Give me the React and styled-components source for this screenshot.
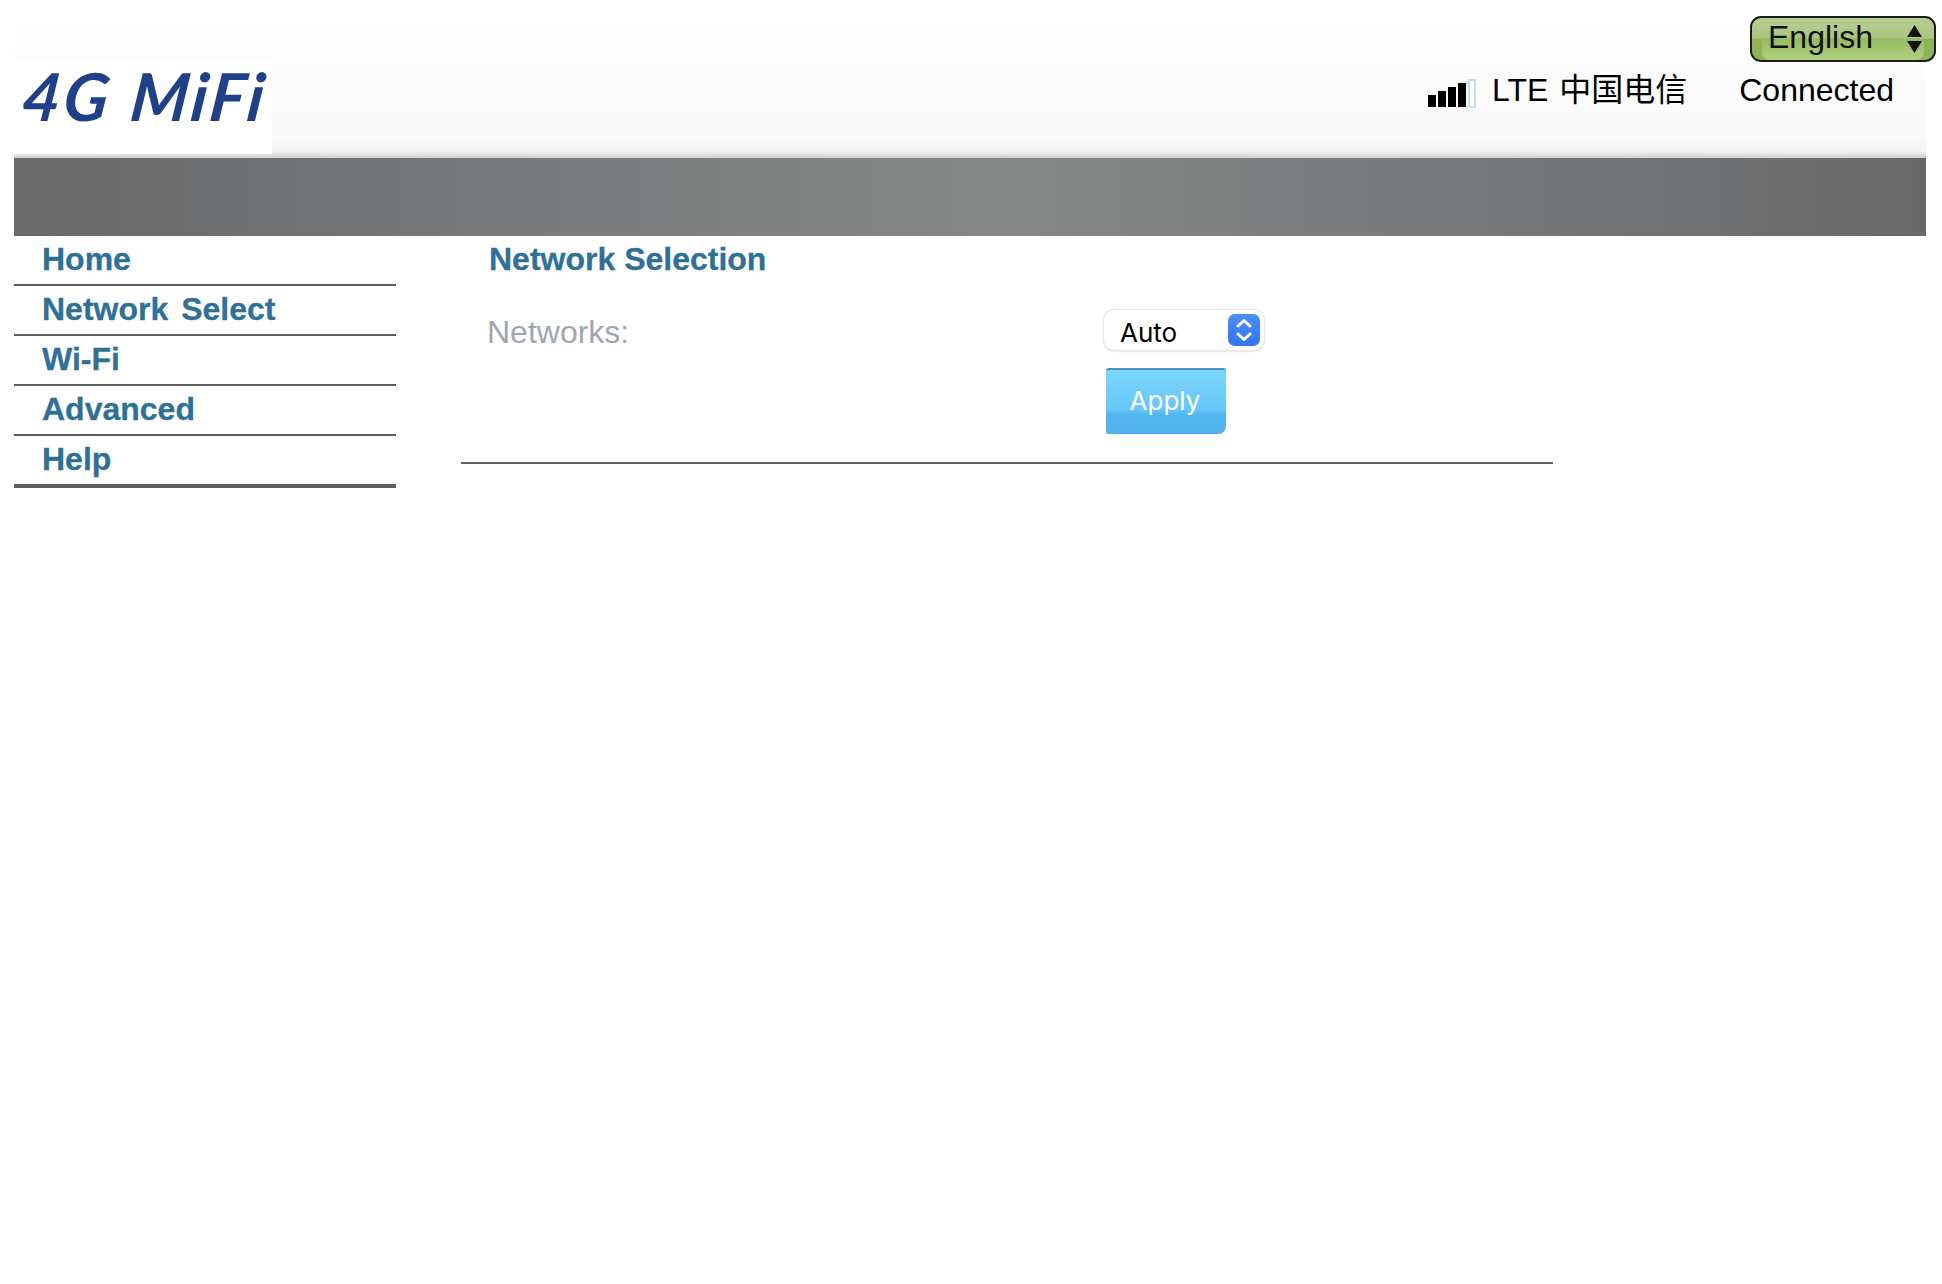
import React from 'react';
import styled, { createGlobalStyle } from 'styled-components';

const GlobalStyle = createGlobalStyle`
  html, body {
    margin: 0;
    background: #fff;
  }
  body {
    font-family: 'Liberation Sans', Arial, sans-serif;
  }
`;

const Page = styled.div`
  width: 1912px;
  margin-left: 14px;
  padding-top: 27px;
`;

const Header = styled.header`
  position: relative;
  height: 131px;
  display: flex;
  justify-content: space-between;
  align-items: flex-start;
  background: linear-gradient(to bottom, #fefefe 0%, #fafafa 82%, #f3f3f3 95%, #cfcfcf 100%);
`;

const LogoBox = styled.div`
  margin-top: 33px;
  width: 258px;
  height: 94px;
  background: #fff;
`;

const Logo = styled.div`
  box-sizing: border-box;
  padding: 0 0 0 9px;
  width: 258px;
  font-family: 'Lato', sans-serif;
  font-style: italic;
  font-weight: 700;
  font-size: 66px;
  line-height: 72px;
  letter-spacing: 3px;
  word-spacing: 2px;
  white-space: nowrap;
  color: #21408a;
  transform: skewX(-7deg);
`;

const Status = styled.div`
  display: flex;
  align-items: center;
  margin: 43px 32px 0 0;
  font-size: 32px;
  line-height: 40px;
  color: #000;
`;

const Signal = styled.svg`
  display: block;
  width: 50px;
  height: 30px;
  margin: 8px 15px 0 0;
  filter: blur(0.4px);
`;

const Carrier = styled.span`
  font-family: 'Liberation Sans', 'Noto Sans CJK SC', sans-serif;
  word-spacing: 2px;
  margin-right: 52px;
`;

const LangBox = styled.div`
  position: absolute;
  top: -11px;
  right: -10px;
  width: 186px;
  height: 46px;
  box-sizing: border-box;
  border: 2px solid #1d1d1d;
  border-radius: 11px;
  overflow: hidden;
  background: linear-gradient(to bottom, #b9cf94 0%, #a9c57e 48%, #8db356 50%, #8fb55a 100%);
  &::before {
    content: '';
    position: absolute;
    left: 10px;
    right: 10px;
    bottom: 0;
    height: 50%;
    border-radius: 0 0 8px 8px;
    background: linear-gradient(to bottom, #96bb62 0%, #b2d080 100%);
  }
`;

const LangSelect = styled.select`
  position: relative;
  appearance: none;
  width: 100%;
  height: 100%;
  border: 0;
  outline: 0;
  padding: 0 0 5px 16px;
  background: transparent;
  font-family: 'Liberation Sans', sans-serif;
  font-size: 32px;
  color: #111;
`;

const LangArrows = styled.svg`
  position: absolute;
  right: 11px;
  top: 6px;
  width: 17px;
  height: 30px;
  pointer-events: none;
`;

const Band = styled.div`
  height: 78px;
  background: linear-gradient(to right, #69696a 0%, #6f7071 12%, #7a7b7c 28%, #858686 52%, #7c7d7e 68%, #707172 88%, #686869 100%);
`;

const Body = styled.div`
  display: flex;
  align-items: flex-start;
  gap: 65px;
`;

const Nav = styled.nav`
  width: 382px;
  flex: none;
  border-bottom: 2px solid #5f5f5f;
`;

const NavItem = styled.a`
  display: block;
  box-sizing: border-box;
  height: 50px;
  padding-left: 28px;
  border-bottom: 2px solid #5f5f5f;
  font-size: 32px;
  font-weight: 700;
  line-height: 46px;
  color: #2f7096;
  text-decoration: none;
  word-spacing: ${(p) => p.$wide ? '4px' : '0'};
  -webkit-text-stroke: 0.3px #2f7096;
`;

const Main = styled.main`
  width: 1092px;
  flex: none;
  border-bottom: 2px solid #5f5f5f;
  padding-bottom: 28px;
`;

const Title = styled.h2`
  margin: 0;
  padding-left: 28px;
  font-size: 32px;
  font-weight: 700;
  line-height: 46px;
  color: #2f7096;
  -webkit-text-stroke: 0.3px #2f7096;
`;

const FormGrid = styled.div`
  display: grid;
  grid-template-columns: 642px auto;
  justify-content: start;
  align-items: center;
  padding-top: 28px;
  row-gap: 18px;
`;

const Label = styled.label`
  padding: 4px 0 0 26px;
  font-size: 32px;
  line-height: 36px;
  color: #a0a6b1;
`;

const SelectBox = styled.div`
  position: relative;
  box-sizing: border-box;
  width: 160px;
  height: 40px;
  margin-left: 1px;
  border-radius: 10px;
  background: #fff;
  box-shadow: 0 0 0 1px #e6e6e6, 0 1px 2px #b5b5b5;
`;

const NetSelect = styled.select`
  appearance: none;
  width: 100%;
  height: 100%;
  padding: 5px 0 0 16px;
  border: 0;
  outline: 0;
  background: transparent;
  font-family: 'Inter', sans-serif;
  font-size: 26px;
  color: #000;
`;

const NetArrows = styled.svg`
  position: absolute;
  top: 4px;
  right: 4px;
  width: 32px;
  height: 32px;
  border-radius: 7px;
  background: linear-gradient(to bottom, #4a8ff7, #3572f0);
  pointer-events: none;
`;

const ApplyButton = styled.button`
  grid-column: 2;
  justify-self: start;
  width: 120px;
  height: 66px;
  margin-left: 3px;
  padding: 0 2px 3px 0;
  border: 0;
  border-top: 2px solid #4a8fb9;
  border-radius: 3px 3px 8px 2px;
  background: linear-gradient(to bottom, #7cd6fd 0%, #66c6f7 62%, #53b4ef 70%, #50b1ee 100%);
  font-family: 'Inter', sans-serif;
  font-size: 26px;
  color: #fff;
`;

const menu = ['Home', 'Network Select', 'Wi-Fi', 'Advanced', 'Help'];

const App = () => {
  return (
    <Page>
      <GlobalStyle />
      <Header>
        <LogoBox>
          <Logo>4G MiFi</Logo>
        </LogoBox>
        <Status>
          <Signal viewBox="0 0 50 30">
            <rect x="1" y="16" width="8" height="12" fill="#000" />
            <rect x="11" y="12" width="8" height="16" fill="#000" />
            <rect x="21" y="8" width="8" height="20" fill="#000" />
            <rect x="31" y="4" width="8" height="24" fill="#000" />
            <rect x="42" y="1" width="6" height="27" fill="#fff" stroke="#cfdcf0" strokeWidth="2" />
          </Signal>
          <Carrier>LTE 中国电信</Carrier>
          <span>Connected</span>
        </Status>
        <LangBox>
          <LangSelect defaultValue="English">
            <option>English</option>
          </LangSelect>
          <LangArrows viewBox="0 0 17 30">
            <path d="M8.5 1 L16 13 H1 Z M1 17 H16 L8.5 29 Z" fill="#111" />
          </LangArrows>
        </LangBox>
      </Header>
      <Band />
      <Body>
        <Nav>
          {menu.map((item) => (
            <NavItem key={item} href="#" $wide={item === 'Network Select'}>{item}</NavItem>
          ))}
        </Nav>
        <Main>
          <Title>Network Selection</Title>
          <FormGrid>
            <Label>Networks:</Label>
            <SelectBox>
              <NetSelect defaultValue="Auto">
                <option>Auto</option>
              </NetSelect>
              <NetArrows viewBox="0 0 32 32">
                <path d="M10 12 L16 6.5 L22 12 M10 20 L16 25.5 L22 20" fill="none" stroke="#fff" strokeWidth="3" strokeLinecap="round" strokeLinejoin="round" />
              </NetArrows>
            </SelectBox>
            <ApplyButton type="button">Apply</ApplyButton>
          </FormGrid>
        </Main>
      </Body>
    </Page>
  );
};

export default App;
